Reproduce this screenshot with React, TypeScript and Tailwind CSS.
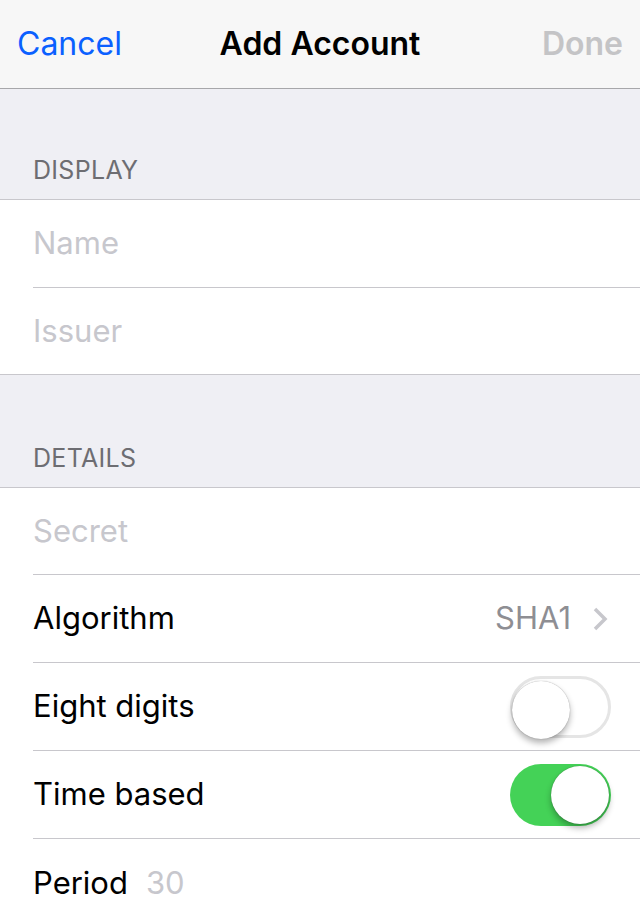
import React from "react";

const font = { fontFamily: "Inter, 'Noto Sans', sans-serif" };

function Toggle({ on }: { on: boolean }) {
  return (
    <div
      className={
        "relative h-[62px] w-[101px] rounded-full " +
        (on ? "bg-[#44d257]" : "bg-white border-[3px] border-[#e5e5e5]")
      }
    >
      <div
        className={
          "absolute top-[2px] h-[58px] w-[58px] rounded-full bg-white shadow-[0_4px_6px_rgba(0,0,0,0.3),0_0_1px_rgba(0,0,0,0.4)] " +
          (on ? "right-[2px]" : "left-[-1px] top-[-1px]")
        }
      />
    </div>
  );
}

function Row({
  children,
  last,
  h,
  pr = "pr-[29px]",
}: {
  children: React.ReactNode;
  last?: boolean;
  h: string;
  pr?: string;
}) {
  return (
    <div className="pl-[33px]">
      <div
        className={
          "flex items-center " +
          h +
          " " +
          pr +
          " " +
          (last ? "" : "border-b border-[#c8c7cc]")
        }
      >
        {children}
      </div>
    </div>
  );
}

export default function App() {
  return (
    <div className="h-[920px] w-[640px] overflow-hidden bg-[#efeff4]" style={font}>
      <div className="grid h-[89px] grid-cols-[1fr_auto_1fr] items-center border-b border-[#a7a7aa] bg-[#f7f7f7] px-[17px]">
        <span className="justify-self-start text-[32px] text-[#0a60ff]">Cancel</span>
        <span className="text-[32px] font-semibold text-black">Add Account</span>
        <span className="justify-self-end text-[32px] font-semibold text-[#c4c4c6]">Done</span>
      </div>
      <div className="flex h-[110px] items-end px-[33px] pb-[10px]">
        <span className="text-[25px] tracking-[0.3px] text-[#6d6d72]">DISPLAY</span>
      </div>
      <div className="border-y border-[#c8c7cc] bg-white">
        <Row h="h-[88px]">
          <span className="text-[31px] text-[#c7c7cd]">Name</span>
        </Row>
        <Row last h="h-[86px]">
          <span className="text-[31px] text-[#c7c7cd]">Issuer</span>
        </Row>
      </div>
      <div className="flex h-[112px] items-end px-[33px] pb-[10px]">
        <span className="text-[25px] tracking-[0.3px] text-[#6d6d72]">DETAILS</span>
      </div>
      <div className="border-t border-[#c8c7cc] bg-white">
        <Row h="h-[87px]">
          <span className="text-[31px] text-[#c7c7cd]">Secret</span>
        </Row>
        <Row h="h-[88px]" pr="pr-[32px]">
          <span className="flex-1 text-[31px] text-black">Algorithm</span>
          <span className="text-[31px] text-[#8e8e93]">SHA1</span>
          <svg width="16" height="26" viewBox="0 0 16 26" className="ml-[21px]">
            <path d="M3 3 L13 13 L3 23" fill="none" stroke="#c7c7cc" strokeWidth="3.5" />
          </svg>
        </Row>
        <Row h="h-[88px]">
          <span className="flex-1 text-[31px] text-black">Eight digits</span>
          <Toggle on={false} />
        </Row>
        <Row h="h-[88px]">
          <span className="flex-1 text-[31px] text-black">Time based</span>
          <Toggle on={true} />
        </Row>
        <Row last h="h-[88px]">
          <span className="text-[31px] text-black">Period</span>
          <span className="ml-[18px] text-[31px] text-[#c7c7cd]">30</span>
        </Row>
      </div>
    </div>
  );
}
